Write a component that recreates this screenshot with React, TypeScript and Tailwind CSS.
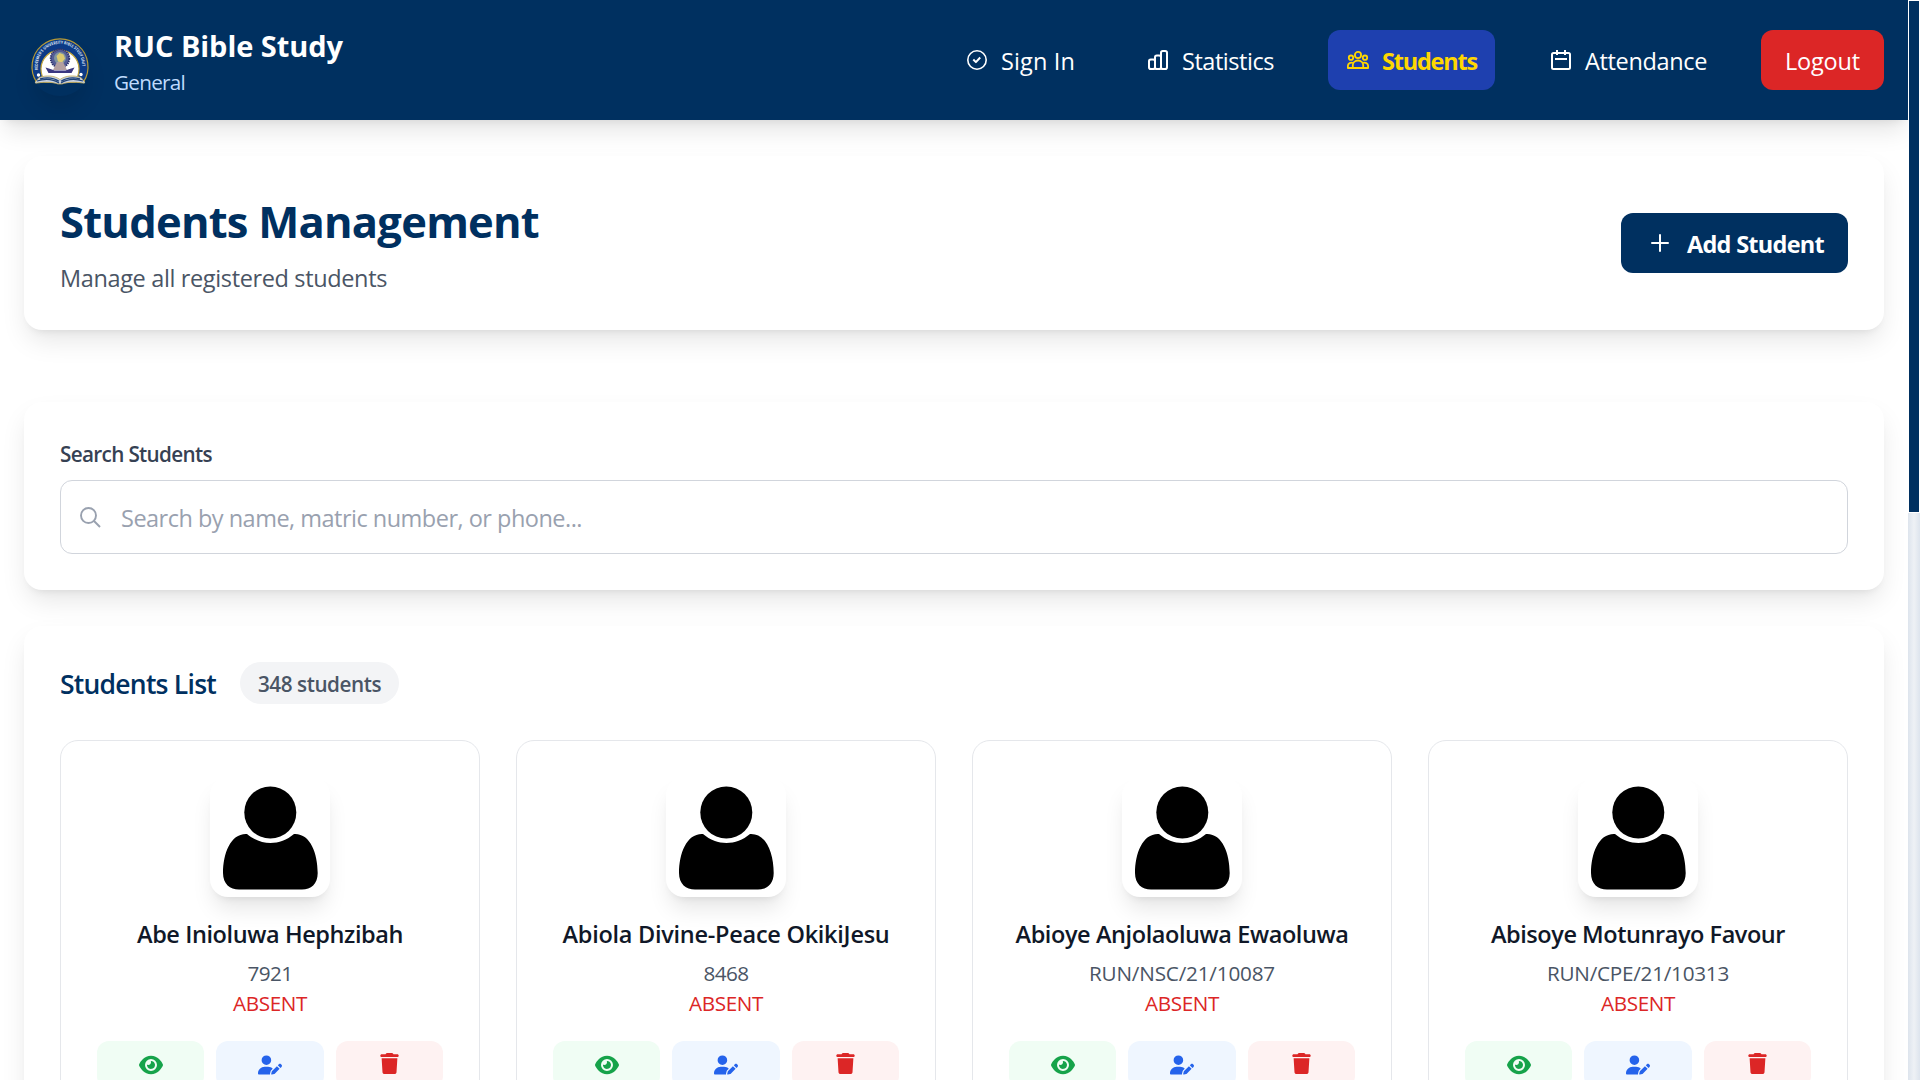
import React from "react";
import { FaEye, FaUserPen, FaTrash } from "react-icons/fa6";

const FONT = "font-['Open_Sans','Noto_Sans',sans-serif]";
const CARD =
  "rounded-[18px] bg-white shadow-[0_13px_27px_-3px_rgba(0,0,0,0.1),0_6px_9px_-6px_rgba(0,0,0,0.1)]";

type TextProps = { children: string; width: number; height: number; size: number; weight?: number; dy?: number; className?: string };

/* Single line of text fitted to a fixed advance width. */
function Line({ children, width, height, size, weight = 400, dy = 0, className = "" }: TextProps) {
  const ref = React.useRef<HTMLSpanElement>(null);
  React.useLayoutEffect(() => {
    const el = ref.current;
    if (!el) return;
    el.style.letterSpacing = "0px";
    const natural = el.getBoundingClientRect().width;
    el.style.letterSpacing = `${(width - natural) / children.length}px`;
  }, [children, width]);
  return (
    <span className={`block shrink-0 whitespace-nowrap ${className}`} style={{ width, height, lineHeight: `${height}px`, fontSize: size, fontWeight: weight, paddingTop: dy }}>
      <span ref={ref} className="inline-block">{children}</span>
    </span>
  );
}

function Logo() {
  return (
    <svg className="mt-3 size-[60px] rounded-full shadow-[0_15px_22px_-4px_rgba(0,0,0,0.12)]" viewBox="0 0 60 60">
      <defs><path id="arc" d="M8.500 36A22.300 22.300 0 1 1 51.500 36" /></defs>
      <path d="M6.500 46A28 28 0 1 1 53.500 46Z" fill="#0d3a86" stroke="#b69a35" strokeWidth="1.200" />
      <path d="M16 46A19 19 0 1 1 44 46Z" fill="#fff" stroke="#c3a63e" strokeWidth="1.200" />
      <text fontSize="4.200" fontWeight="700" fill="#dbe4f3" textLength="74" lengthAdjust="spacingAndGlyphs"><textPath href="#arc" startOffset="2">REDEEMER'S UNIVERSITY BIBLE STUDY UNIT</textPath></text>
      <circle cx="8.500" cy="39" r="1.700" fill="#fff" /><circle cx="51" cy="38.500" r="1.700" fill="#fff" />
      <circle cx="30" cy="22.500" r="9.300" fill="#545d96" stroke="#2d326c" strokeWidth="1.800" strokeDasharray="1.500 .7" />
      <circle cx="30" cy="22" r="6" fill="#7f95a0" />
      <path d="M26.500 20l3-3 4 1.500 1.500 4-3 4-4-1z" fill="#dcca6f" />
      <path d="M23 34l4-8h6l4 8z" fill="#b39fa0" />
      <path d="M15.500 31.500l5 1.500 4 1.500h11l4-1.500 5-1.500-3 5.500H18.500z" fill="#3a3780" />
      <path d="M4 47.500l5-6c8-2.500 15-2 21 2 6-4 13-4.500 21-2l5 6c-9-1.500-17-2-24 .5h-4c-7-2.500-15-2-24-.5z" fill="#c9d3e2" stroke="#c0aa58" strokeWidth=".8" />
      <path d="M7 45c8-2.500 16-2 22 2M10 42.800c8-2 14-1 19 2.500M53 45c-8-2.500-16-2-22 2M50 42.800c-8-2-14-1-19 2.500" fill="none" stroke="#1f4379" strokeWidth="1.200" />
    </svg>
  );
}

const stroke = { fill: "none", stroke: "currentColor", strokeWidth: 2, strokeLinejoin: "round" as const };
const CheckIcon = () => <svg className="size-5" viewBox="0 0 20 20" {...stroke}><circle cx="10" cy="10" r="9.200" strokeWidth="1.600" /><path d="M6.300 9.500l2.600 2.600 4.300-4.600" /></svg>;
const ChartIcon = () => <svg className="size-5" viewBox="0 0 20 20" {...stroke}><rect x="1" y="9.500" width="6" height="9.500" rx="1.800" /><rect x="7" y="5.500" width="6" height="13.500" rx="1.800" /><rect x="13" y="1" width="6" height="18" rx="1.800" /></svg>;
const PeopleIcon = () => <svg className="h-5 w-[22px]" viewBox="0 0 22 20" {...stroke} strokeWidth="1.800"><circle cx="11" cy="5" r="3.100" /><circle cx="4" cy="7.700" r="2.200" /><circle cx="18" cy="7.700" r="2.200" /><path d="M5.800 18v-2.800a5.200 4.700 0 0 1 10.400 0V18zM5.800 18H.9v-2.300c0-2.400 2.800-3.800 5.400-2.500M16.200 18h4.900v-2.300c0-2.400-2.800-3.800-5.400-2.500" /></svg>;
const CalendarIcon = () => <svg className="size-5" viewBox="0 0 20 20" {...stroke}><rect x="1" y="3" width="18" height="16" rx="1.500" /><path d="M6 0v5M14 0v5M4 9h12" /></svg>;

const Avatar = () => (
  <svg className="size-[120px] shrink-0 rounded-[18px] bg-white shadow-[0_15px_22.5px_-4.5px_rgba(0,0,0,0.1),0_6px_9px_-6px_rgba(0,0,0,0.1)]" viewBox="0 0 120 120">
    <circle cx="60.300" cy="35.500" r="26" />
    <path d="M37 57C21 56 13 76 13 96C13 107 20 112.500 29 112.500H92C101 112.500 107.700 107 107.700 96C107.700 76 100 56 84 57C70 69 51 69 37 57Z" />
  </svg>
);

const students = [
  { name: "Abe Inioluwa Hephzibah", nw: 266, id: "7921", iw: 45 },
  { name: "Abiola Divine-Peace OkikiJesu", nw: 327, id: "8468", iw: 45 },
  { name: "Abioye Anjolaoluwa Ewaoluwa", nw: 333, id: "RUN/NSC/21/10087", iw: 186 },
  { name: "Abisoye Motunrayo Favour", nw: 294, id: "RUN/CPE/21/10313", iw: 182 },
];

function StudentCard({ name, nw, id, iw }: (typeof students)[number]) {
  return (
    <article className="flex h-[400px] flex-col items-center rounded-[18px] border border-gray-200 px-9 pt-9">
      <Avatar />
      <Line className="mt-[18px] text-gray-900" width={nw} height={36} size={23.5} weight={600} dy={1}>{name}</Line>
      <Line className="mt-[6px] text-gray-600" width={iw} height={30} size={20.700} dy={1}>{id}</Line>
      <Line className="text-[#dc2626]" width={74} height={30} size={20.700} dy={1}>ABSENT</Line>
      <div className="mt-6 grid w-full grid-cols-3 gap-3">
        <button className="flex h-[47px] items-center justify-center rounded-xl bg-green-50 text-[#16a34a]"><FaEye size={24} /></button>
        <button className="flex h-[47px] items-center justify-center rounded-xl bg-blue-50 text-[#2563eb]"><FaUserPen size={24} /></button>
        <button className="flex h-[47px] items-center justify-center rounded-xl bg-red-50 pb-0.5 text-[#dc2626]"><FaTrash size={21} /></button>
      </div>
    </article>
  );
}

export default function App() {
  return (
    <div className={`flex h-[1080px] w-[1920px] overflow-hidden bg-white ${FONT}`}>
      <div className="min-w-0 flex-1 overflow-hidden">
        <header className="flex h-[120px] items-center justify-between bg-[#003060] pr-6 pl-[30px] text-white shadow-[0_15px_22.5px_-4.5px_rgba(0,0,0,0.1),0_6px_9px_-6px_rgba(0,0,0,0.1)]">
          <div className="flex items-center gap-6">
            <Logo />
            <div className="pt-[7px]">
              <Line width={229} height={36} size={29} weight={700}>RUC Bible Study</Line>
              <Line className="text-[#bfdbfe]" width={71} height={36} size={20.700}>General</Line>
            </div>
          </div>
          <nav className="flex items-center">
            <a className="mr-[73px] flex items-center gap-[14px]"><CheckIcon /><Line width={74} height={30} size={23.500} dy={1}>Sign In</Line></a>
            <a className="mr-[54px] flex items-center gap-[14px]"><ChartIcon /><Line width={92} height={30} size={23.500} dy={1}>Statistics</Line></a>
            <a className="mr-[56px] flex h-[60px] w-[167px] items-center gap-[13px] rounded-xl bg-[#1e40af] pl-[19px] text-[#ffd700]"><PeopleIcon /><Line width={95} height={30} size={23.500} weight={700} dy={1}>Students</Line></a>
            <a className="mr-[54px] flex items-center gap-[14px]"><CalendarIcon /><Line width={122} height={30} size={23.500} dy={1}>Attendance</Line></a>
            <button className="flex h-[60px] w-[123px] items-center justify-center rounded-xl bg-[#dc2626]"><Line width={75} height={30} size={23.500} dy={1}>Logout</Line></button>
          </nav>
        </header>

        <main className="px-6 pt-9">
          <section className={`flex h-[174px] items-center justify-between px-9 ${CARD}`}>
            <div className="pb-px">
              <Line className="text-[#003060]" width={479} height={60} size={43.500} weight={700} dy={3}>Students Management</Line>
              <Line className="mt-[11px] text-gray-600" width={327} height={36} size={23.500}>Manage all registered students</Line>
            </div>
            <button className="flex h-[60px] w-[227px] items-center gap-[18px] rounded-xl bg-[#003060] pl-[30px] text-white">
              <svg className="size-[18px]" viewBox="0 0 18 18" stroke="currentColor" strokeWidth="2" strokeLinecap="round"><path d="M9 1v16M1 9h16" /></svg>
              <Line width={137} height={30} size={23.500} weight={700} dy={1}>Add Student</Line>
            </button>
          </section>

          <section className={`mt-[72px] h-[188px] px-9 pt-9 ${CARD}`}>
            <Line className="text-gray-700" width={152} height={30} size={20.700} weight={600} dy={1}>Search Students</Line>
            <div className="mt-3 flex h-[74px] items-center gap-5 rounded-xl border border-gray-300 pl-[19px] text-gray-400">
              <svg className="size-[21px]" viewBox="0 0 21 21" fill="none" stroke="currentColor" strokeWidth="1.900"><circle cx="8.500" cy="8.500" r="7.500" /><path d="M14 14l6 6" /></svg>
              <Line width={461} height={36} size={23.500} dy={1}>Search by name, matric number, or phone...</Line>
            </div>
          </section>

          <section className={`mt-9 h-[600px] px-9 pt-9 ${CARD}`}>
            <div className="flex h-[42px] items-center gap-6">
              <Line className="text-[#003060]" width={156} height={42} size={26.500} weight={600} dy={1}>Students List</Line>
              <div className="flex h-[42px] w-[159px] items-center justify-center rounded-full bg-gray-100 text-gray-600"><Line width={123} height={30} size={20.700} weight={600} dy={1}>348 students</Line></div>
            </div>
            <div className="mt-9 grid grid-cols-4 gap-9">
              {students.map((s) => <StudentCard key={s.name} {...s} />)}
            </div>
          </section>
        </main>
      </div>
      <div className="h-full w-3 bg-[linear-gradient(90deg,#dde4ed,#eef1f5_50%,#dde4ed)]">
        <div className="h-[513px] border border-white bg-[#003060]" />
      </div>
    </div>
  );
}
